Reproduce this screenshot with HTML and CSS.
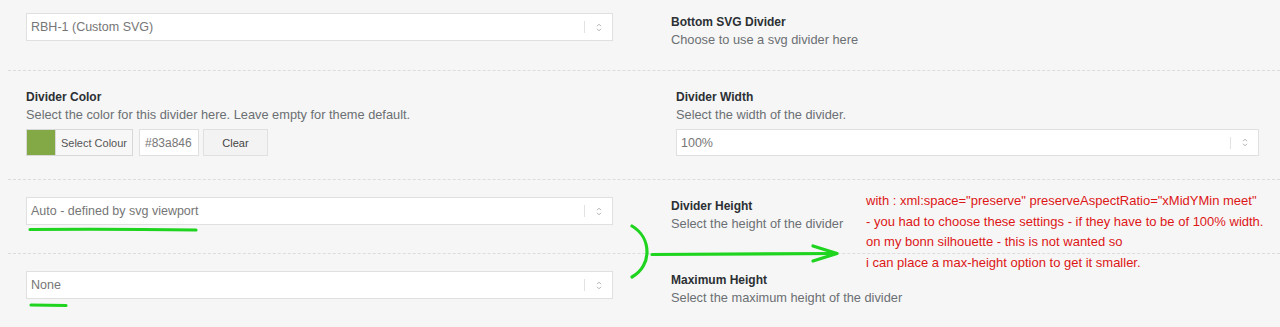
FILE: index.html
```html
<!DOCTYPE html>
<html lang="en">
<head>
<meta charset="utf-8">
<title>Divider settings</title>
<link rel="stylesheet" href="styles.css">
</head>
<body>
<div class="page">
  <div class="row row-first">
    <div class="cell">
      <div class="select">
        <span class="select-value">RBH-1 (Custom SVG)</span>
        <span class="select-sep"></span>
        <span class="select-arrows"><svg width="6" height="9" viewBox="0 0 6 9"><path d="M1 3.2 L3 1.2 L5 3.2" /><path d="M1 5.8 L3 7.8 L5 5.8" /></svg></span>
      </div>
    </div>
    <div class="cell cell-right">
      <div class="title">Bottom SVG Divider</div>
      <div class="desc">Choose to use a svg divider here</div>
    </div>
  </div>

  <div class="row row-color">
    <div class="cell">
      <div class="title">Divider Color</div>
      <div class="desc">Select the color for this divider here. Leave empty for theme default.</div>
      <div class="picker">
        <div class="color-result">
          <span class="swatch"></span>
          <span class="color-label">Select Colour</span>
        </div>
        <div class="hex">#83a846</div>
        <div class="clear-btn">Clear</div>
      </div>
    </div>
    <div class="cell cell-right cell-indent">
      <div class="title">Divider Width</div>
      <div class="desc">Select the width of the divider.</div>
      <div class="select select-inline">
        <span class="select-value">100%</span>
        <span class="select-sep"></span>
        <span class="select-arrows"><svg width="6" height="9" viewBox="0 0 6 9"><path d="M1 3.2 L3 1.2 L5 3.2" /><path d="M1 5.8 L3 7.8 L5 5.8" /></svg></span>
      </div>
    </div>
  </div>

  <div class="row">
    <div class="cell">
      <div class="select">
        <span class="select-value">Auto - defined by svg viewport</span>
        <span class="select-sep"></span>
        <span class="select-arrows"><svg width="6" height="9" viewBox="0 0 6 9"><path d="M1 3.2 L3 1.2 L5 3.2" /><path d="M1 5.8 L3 7.8 L5 5.8" /></svg></span>
      </div>
    </div>
    <div class="cell cell-right">
      <div class="title">Divider Height</div>
      <div class="desc">Select the height of the divider</div>
    </div>
  </div>

  <div class="row row-last">
    <div class="cell">
      <div class="select">
        <span class="select-value">None</span>
        <span class="select-sep"></span>
        <span class="select-arrows"><svg width="6" height="9" viewBox="0 0 6 9"><path d="M1 3.2 L3 1.2 L5 3.2" /><path d="M1 5.8 L3 7.8 L5 5.8" /></svg></span>
      </div>
    </div>
    <div class="cell cell-right">
      <div class="title">Maximum Height</div>
      <div class="desc">Select the maximum height of the divider</div>
    </div>
  </div>

  <svg class="scribble" width="1280" height="327" viewBox="0 0 1280 327">
    <path d="M30 229.5 Q110 228.8 196 230" />
    <path d="M31 305 L66 305.5" />
    <path d="M632 226 C652 238 652 266 632 277" />
    <path d="M652 254.5 L836 253.5" />
    <path d="M813 246 L837 253.5 L813 261" />
  </svg>

  <div class="note">
    <p>with : xml:space="preserve" preserveAspectRatio="xMidYMin meet"</p>
    <p>- you had to choose these settings - if they have to be of 100% width.</p>
    <p>on my bonn silhouette - this is not wanted so</p>
    <p>i can place a max-height option to get it smaller.</p>
  </div>
</div>
</body>
</html>
```

FILE: styles.css
```css
html, body {
  margin: 0;
  padding: 0;
  background: #f6f6f6;
}

body {
  font-family: "Liberation Sans", Arial, sans-serif;
  color: #23282d;
  overflow: hidden;
}

.page {
  position: relative;
  width: 1280px;
  height: 327px;
}

.row {
  display: grid;
  grid-template-columns: 587px 1fr;
  column-gap: 58px;
  margin-left: 8px;
  padding: 17px 21px 20px 18px;
  border-bottom: 1px dashed #dcdcdc;
}

.row-first {
  padding-top: 13px;
  padding-bottom: 21px;
}

.row-color {
  padding-bottom: 23px;
}

.row-last {
  border-bottom: none;
}

.cell {
  min-width: 0;
}

.cell-indent {
  padding-left: 5px;
}

.title {
  font-size: 12px;
  font-weight: bold;
  line-height: 18px;
  color: #2c3034;
}

.desc {
  font-size: 12.8px;
  line-height: 18px;
  color: #6b6f73;
}

.select {
  display: flex;
  align-items: center;
  height: 28px;
  box-sizing: border-box;
  background: #fff;
  border: 1px solid #e0e0e0;
  padding-left: 4px;
}

.select-inline {
  margin-top: 5px;
  height: 27px;
}

.select-value {
  flex: 1;
  font-size: 12.5px;
  color: #767676;
}

.select-sep {
  width: 1px;
  height: 12px;
  background: #e2e2e2;
}

.select-arrows {
  width: 27px;
  display: flex;
  justify-content: center;
  align-items: center;
}

.select-arrows svg path {
  fill: none;
  stroke: #b0b0b0;
  stroke-width: 1;
}

.picker {
  display: flex;
  margin-top: 5px;
  height: 27px;
}

.color-result {
  display: flex;
  align-items: stretch;
  border: 1px solid #d8d8d8;
  background: #f7f7f7;
  box-sizing: border-box;
  width: 107px;
}

.swatch {
  width: 28px;
  background: #83a846;
}

.color-label {
  flex: 1;
  font-size: 11px;
  color: #555;
  display: flex;
  align-items: center;
  justify-content: center;
  border-left: 1px solid #d8d8d8;
}

.hex {
  margin-left: 6px;
  width: 60px;
  box-sizing: border-box;
  background: #fff;
  border: 1px solid #e0e0e0;
  font-size: 12px;
  color: #777;
  display: flex;
  align-items: center;
  padding-left: 5px;
}

.clear-btn {
  margin-left: 4px;
  width: 65px;
  box-sizing: border-box;
  background: #f3f3f3;
  border: 1px solid #e0e0e0;
  font-size: 11px;
  color: #444;
  display: flex;
  align-items: center;
  justify-content: center;
}

.scribble {
  position: absolute;
  left: 0;
  top: 0;
  pointer-events: none;
}

.scribble path {
  fill: none;
  stroke: #1fd41f;
  stroke-width: 3.2;
  stroke-linecap: round;
  stroke-linejoin: round;
}

.note {
  position: absolute;
  left: 866px;
  top: 191px;
  font-size: 13px;
  line-height: 20.5px;
  color: #dd1616;
}

.note p {
  margin: 0;
  white-space: nowrap;
}
```
